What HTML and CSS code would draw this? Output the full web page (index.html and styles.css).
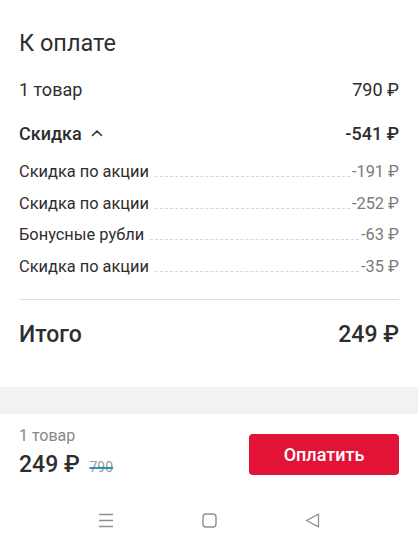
FILE: index.html
```html
<!DOCTYPE html>
<html lang="ru">
<head>
<meta charset="utf-8">
<link rel="stylesheet" href="styles.css">
</head>
<body>
<div class="page">
  <section class="summary">
    <h1 class="title">К оплате</h1>
    <div class="row">
      <span>1 товар</span>
      <span>790 ₽</span>
    </div>
    <div class="row row-medium">
      <span class="toggle">Скидка
        <svg class="chev" width="12" height="8" viewBox="0 0 12 8"><path d="M1.5 6.5 L6 2 L10.5 6.5" fill="none" stroke="#333" stroke-width="1.6" stroke-linecap="round" stroke-linejoin="round"/></svg>
      </span>
      <span>-541 ₽</span>
    </div>
    <ul class="details">
      <li class="detail"><span class="label">Скидка по акции</span><span class="leader"></span><span class="value">-191 ₽</span></li>
      <li class="detail"><span class="label">Скидка по акции</span><span class="leader"></span><span class="value">-252 ₽</span></li>
      <li class="detail"><span class="label">Бонусные рубли</span><span class="leader"></span><span class="value">-63 ₽</span></li>
      <li class="detail"><span class="label">Скидка по акции</span><span class="leader"></span><span class="value">-35 ₽</span></li>
    </ul>
    <div class="divider"></div>
    <div class="row row-total">
      <span>Итого</span>
      <span>249 ₽</span>
    </div>
  </section>
  <div class="band"></div>
  <footer class="bar">
    <div class="bar-info">
      <div class="bar-qty">1 товар</div>
      <div class="bar-price">249 ₽ <s class="old">790</s></div>
    </div>
    <button class="pay">Оплатить</button>
  </footer>
  <nav class="sysnav">
    <svg width="16" height="15" viewBox="0 0 16 15"><path d="M1 1.5 H15 M1 7.5 H15 M1 13.5 H15" stroke="#8e8e8e" stroke-width="1.3" fill="none"/></svg>
    <svg width="15" height="15" viewBox="0 0 15 15"><rect x="1" y="1" width="13" height="13" rx="3" fill="none" stroke="#8e8e8e" stroke-width="1.4"/></svg>
    <svg width="15" height="15" viewBox="0 0 15 15"><path d="M13.5 1.2 L1.5 7.5 L13.5 13.8 Z" fill="none" stroke="#8e8e8e" stroke-width="1.3" stroke-linejoin="round"/></svg>
  </nav>
</div>
</body>
</html>
```

FILE: styles.css
```css
* { box-sizing: border-box; }
html, body { margin: 0; padding: 0; background: #fff; }
body {
  font-family: Roboto, "Noto Sans", "Liberation Sans", sans-serif;
  color: #2e2e2e;
  width: 418px;
  height: 545px;
  overflow: hidden;
}
.summary { padding: 29px 19px 30px; }
.title {
  margin: 0;
  font-size: 23.5px;
  line-height: 28px;
  font-weight: 400;
}
.row {
  display: flex;
  justify-content: space-between;
  align-items: center;
  font-size: 18px;
  line-height: 44px;
}
.title + .row { margin-top: 11px; }
.row-medium { font-weight: 460; }
.toggle { display: inline-flex; align-items: center; gap: 9px; }
.chev { display: block; margin-top: -2px; }
.details { list-style: none; margin: 0; padding: 0; }
.detail {
  display: flex;
  align-items: baseline;
  font-size: 16.4px;
  line-height: 31.5px;
}
.label { color: #2e2e2e; }
.leader {
  flex: 1;
  margin: 0 2px 0 6px;
  border-bottom: 1px dashed #d6d6d6;
  height: 1px;
}
.value { color: #7b7b7b; }
.divider { height: 1px; background: #dedede; margin-top: 17px; }
.row-total { margin-top: 13px; font-size: 23px; font-weight: 460; }
.band { height: 27px; background: #f2f2f5; }
.bar {
  display: flex;
  justify-content: space-between;
  align-items: flex-start;
  padding: 12px 19px 0;
}
.bar-qty { font-size: 16px; line-height: 20px; color: #888; }
.bar-price { font-size: 23px; line-height: 38px; font-weight: 460; }
.old {
  font-size: 14px;
  font-weight: 400;
  color: #999;
  margin-left: 4px;
  text-decoration: line-through;
  text-decoration-color: #1f9bb0;
  text-decoration-thickness: 2px;
}
.pay {
  margin-top: 8px;
  width: 150px;
  height: 41px;
  border: 0;
  border-radius: 4px;
  background: #e31337;
  color: #fff;
  font-family: inherit;
  font-size: 18px;
  font-weight: 460;
}
.sysnav {
  display: grid;
  grid-template-columns: repeat(3, 103px);
  justify-content: center;
  justify-items: center;
  margin-top: 27px;
}
.sysnav svg { display: block; }
```
